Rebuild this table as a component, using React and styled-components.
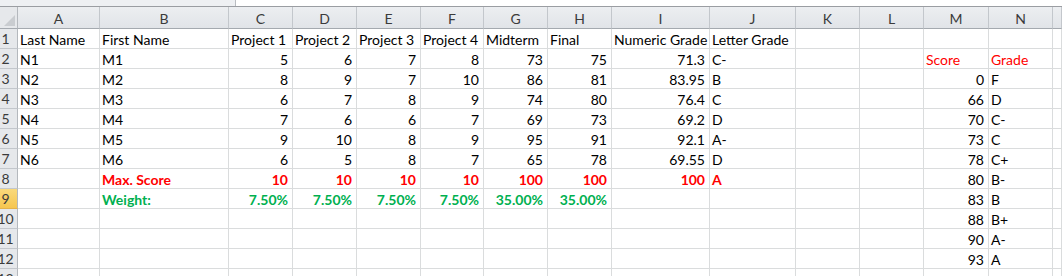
import React from 'react'
import styled, { createGlobalStyle } from 'styled-components'

const GlobalStyle = createGlobalStyle`
  html, body {
    margin: 0;
    padding: 0;
    background: #ffffff;
  }
  body {
    font-family: Lato, "Liberation Sans", Arial, sans-serif;
  }
`

const columns = ['A', 'B', 'C', 'D', 'E', 'F', 'G', 'H', 'I', 'J', 'K', 'L', 'M', 'N', '']
const widths = [18, 82, 129, 64, 64, 64, 63, 64, 64, 98, 86, 64, 64, 65, 64]

const students = [
  ['N1', 'M1', 5, 6, 7, 8, 73, 75, '71.3', 'C-'],
  ['N2', 'M2', 8, 9, 7, 10, 86, 81, '83.95', 'B'],
  ['N3', 'M3', 6, 7, 8, 9, 74, 80, '76.4', 'C'],
  ['N4', 'M4', 7, 6, 6, 7, 69, 73, '69.2', 'D'],
  ['N5', 'M5', 9, 10, 8, 9, 95, 91, '92.1', 'A-'],
  ['N6', 'M6', 6, 5, 8, 7, 65, 78, '69.55', 'D'],
]

const scale = [
  ['0', 'F'], ['66', 'D'], ['70', 'C-'], ['73', 'C'], ['78', 'C+'],
  ['80', 'B-'], ['83', 'B'], ['88', 'B+'], ['90', 'A-'], ['93', 'A'],
]

// each row: 15 cells (A..O), cell = {v, align, tone, bold}
function buildRows() {
  const rows = []
  const empty = () => ({})
  const head = ['Last Name', 'First Name', 'Project 1', 'Project 2', 'Project 3', 'Project 4', 'Midterm', 'Final', 'Numeric Grade', 'Letter Grade']
  rows.push([...head.map(v => ({ v })), empty(), empty(), empty(), empty(), empty()])

  for (let i = 0; i < 11; i++) {
    const r = Array.from({ length: 15 }, empty)
    const s = students[i]
    if (s) {
      r[0] = { v: s[0] }
      r[1] = { v: s[1] }
      for (let c = 2; c < 9; c++) r[c] = { v: s[c], align: 'right' }
      r[9] = { v: s[9] }
    }
    if (i === 6) {
      r[1] = { v: 'Max. Score', tone: 'red', bold: true }
      ;[10, 10, 10, 10, 100, 100, 100].forEach((v, k) => {
        r[k + 2] = { v, align: 'right', tone: 'red', bold: true }
      })
      r[9] = { v: 'A', tone: 'red', bold: true }
    }
    if (i === 7) {
      r[1] = { v: 'Weight:', tone: 'green', bold: true }
      ;['7.50%', '7.50%', '7.50%', '7.50%', '35.00%', '35.00%'].forEach((v, k) => {
        r[k + 2] = { v, align: 'right', tone: 'green', bold: true }
      })
    }
    if (i === 0) {
      r[12] = { v: 'Score', tone: 'red' }
      r[13] = { v: 'Grade', tone: 'red' }
    } else {
      const g = scale[i - 1]
      r[12] = { v: g[0], align: 'right' }
      r[13] = { v: g[1] }
    }
    rows.push(r)
  }
  rows.push(Array.from({ length: 15 }, empty))
  return rows
}

const rows = buildRows()

function App() {
  return (
    <>
      <GlobalStyle />
      <Window>
        <FormulaStrip>
          <NameBoxArea />
          <FormulaArea />
        </FormulaStrip>
        <Sheet>
          <Corner />
          {columns.map((c, i) => (
            <ColHeader key={c + i}>{c}</ColHeader>
          ))}
          {rows.map((r, ri) => (
            <React.Fragment key={ri}>
              <RowHeader $selected={ri === 8}>
                <span>{ri + 1}</span>
              </RowHeader>
              {r.map((cell, ci) => (
                <Cell key={ci} $align={cell.align} $tone={cell.tone} $bold={cell.bold}>
                  {cell.v}
                </Cell>
              ))}
            </React.Fragment>
          ))}
        </Sheet>
      </Window>
    </>
  )
}

export default App

const Window = styled.div`
  width: 1062px;
  height: 276px;
  overflow: hidden;
  background: #ffffff;
`

const FormulaStrip = styled.div`
  display: flex;
  height: 6px;
  border-bottom: 1px solid #9a9da2;
`

const NameBoxArea = styled.div`
  width: 235px;
  background: #eef0f3;
  border-right: 1px solid #b9bcc1;
`

const FormulaArea = styled.div`
  flex: 1;
  background: #ffffff;
`

const Sheet = styled.div`
  display: grid;
  grid-template-columns: ${widths.map(w => w + 'px').join(' ')} 1fr;
  grid-auto-rows: 20px;
  grid-template-rows: 22px;
  font-size: 14px;
  color: #000000;
`

const Corner = styled.div`
  position: relative;
  background: #e6e8eb;
  border-right: 1px solid #b4b8bd;
  border-bottom: 1px solid #a4a9af;

  &::after {
    content: '';
    position: absolute;
    right: 2px;
    bottom: 2px;
    border-style: solid;
    border-width: 0 0 11px 11px;
    border-color: transparent transparent #c9ccd0 transparent;
  }
`

const ColHeader = styled.div`
  display: flex;
  align-items: center;
  justify-content: center;
  padding-top: 1px;
  background: linear-gradient(#eceef1, #e1e4e8);
  border-right: 1px solid #c3c7cc;
  border-bottom: 1px solid #a4a9af;
  color: #3b3b3b;
  font-size: 14px;
`

const RowHeader = styled.div`
  display: flex;
  align-items: center;
  justify-content: center;
  overflow: hidden;
  background: ${p => (p.$selected ? 'linear-gradient(#f9d97c, #f6c650)' : '#e6e8eb')};
  border-right: 1px solid #b4b8bd;
  border-bottom: 1px solid ${p => (p.$selected ? '#e5b24a' : '#c3c7cc')};
  color: #3b3b3b;
  font-size: 14px;

  span {
    margin-right: 6px;
    white-space: nowrap;
  }
`

const toneColors = {
  red: '#ff0000',
  green: '#00b050',
}

const Cell = styled.div`
  display: flex;
  align-items: center;
  justify-content: ${p => (p.$align === 'right' ? 'flex-end' : 'flex-start')};
  padding: 1px 4px 0 2px;
  border-right: 1px solid #dadcdd;
  border-bottom: 1px solid #dadcdd;
  white-space: nowrap;
  color: ${p => toneColors[p.$tone] || '#000000'};
  font-weight: ${p => (p.$bold ? 700 : 400)};
  overflow: visible;
  min-width: 0;
`
